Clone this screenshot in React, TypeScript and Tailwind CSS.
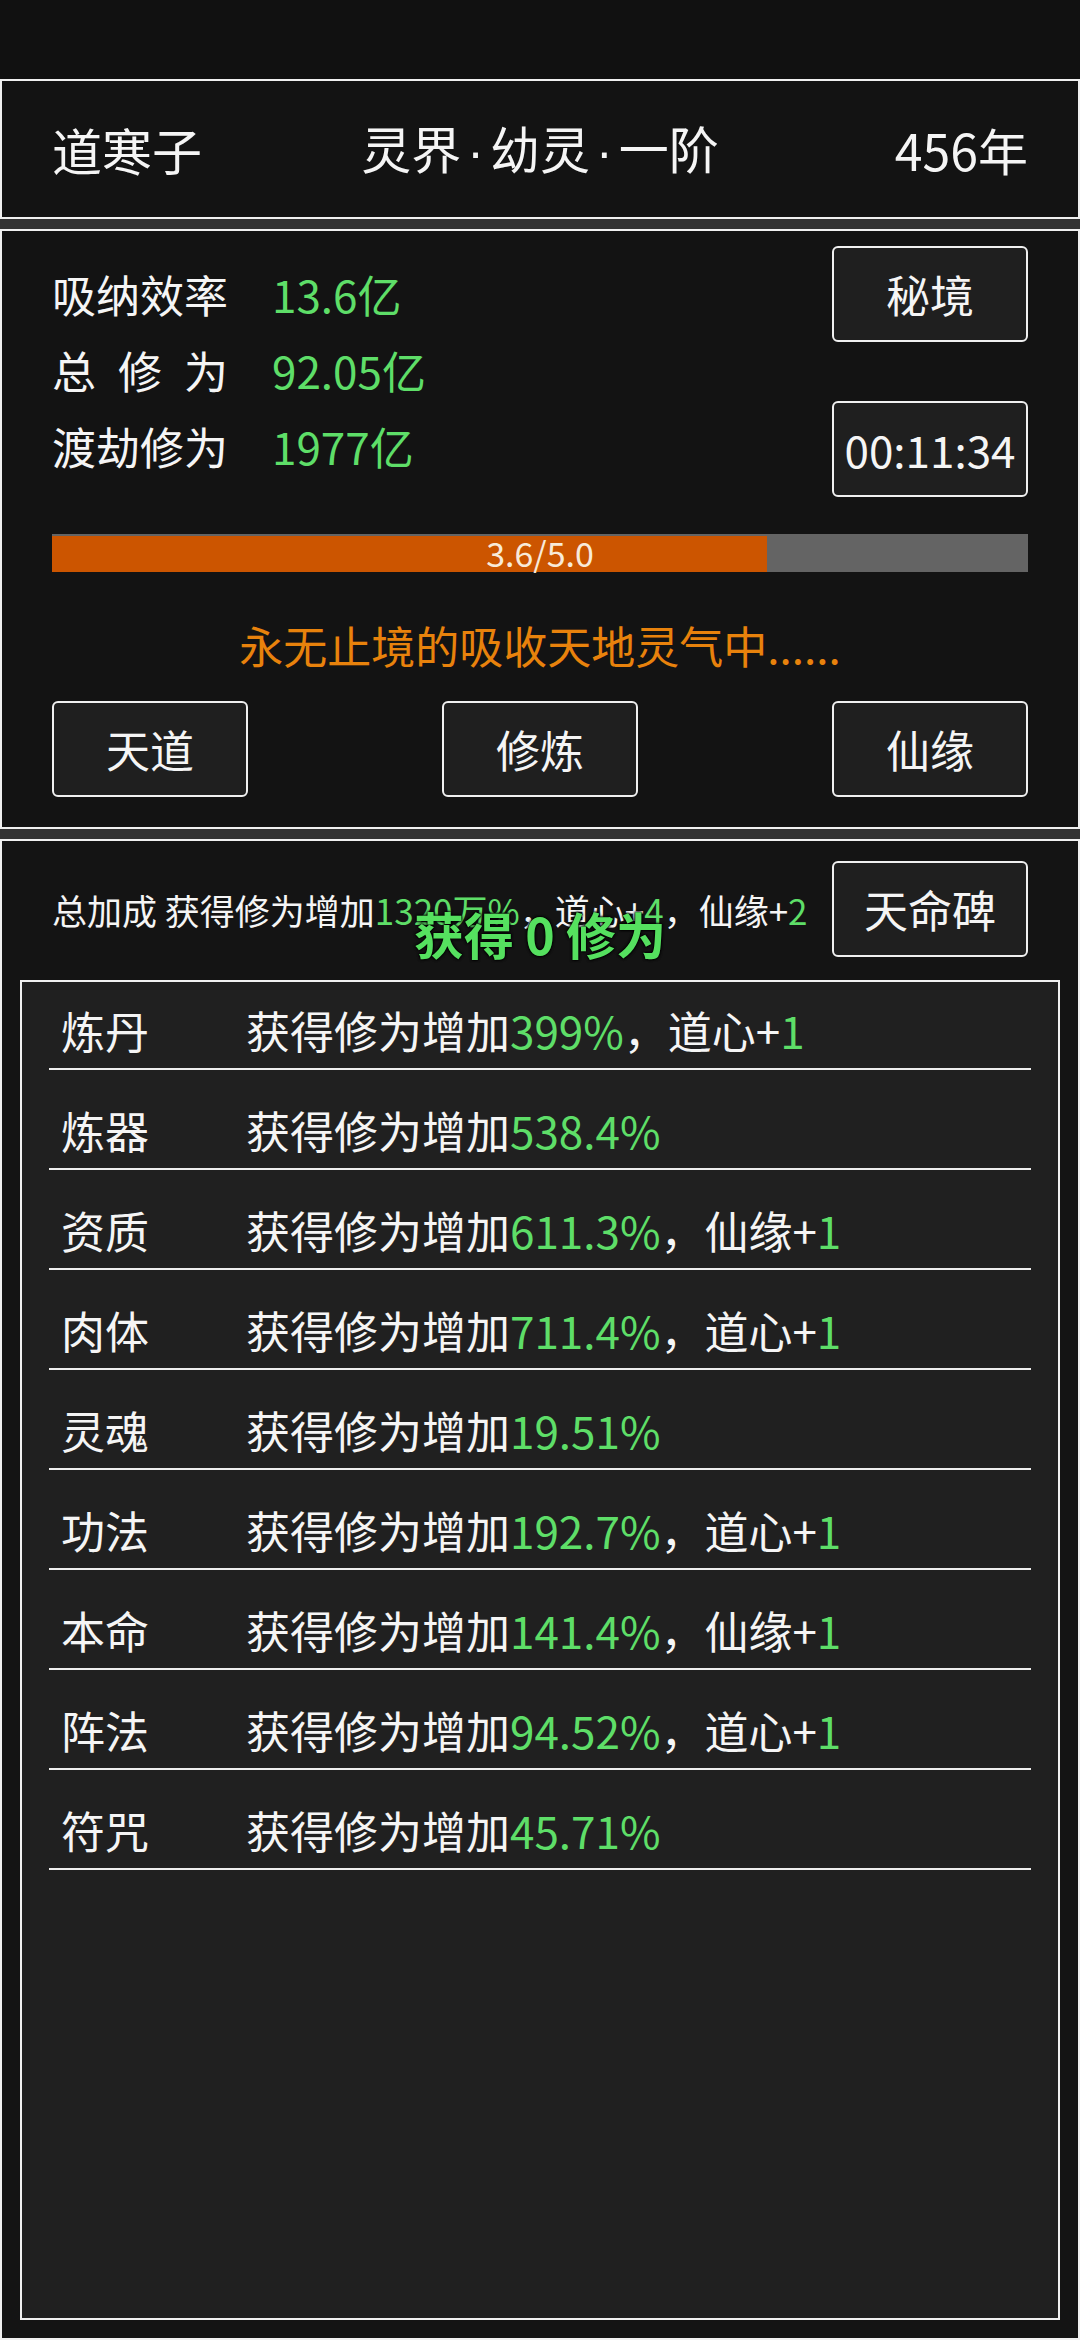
const rows = [
  { name: "炼丹", pct: "399%", extra: "道心" },
  { name: "炼器", pct: "538.4%", extra: "" },
  { name: "资质", pct: "611.3%", extra: "仙缘" },
  { name: "肉体", pct: "711.4%", extra: "道心" },
  { name: "灵魂", pct: "19.51%", extra: "" },
  { name: "功法", pct: "192.7%", extra: "道心" },
  { name: "本命", pct: "141.4%", extra: "仙缘" },
  { name: "阵法", pct: "94.52%", extra: "道心" },
  { name: "符咒", pct: "45.71%", extra: "" },
];

function Btn({ children }: { children: React.ReactNode }) {
  return (
    <div className="w-[196px] h-[96px] flex items-center justify-center border-2 border-[#f0f0f0] rounded-[6px] bg-[#1f1f1f] text-[44px] leading-none text-[#f5f5f5]">
      {children}
    </div>
  );
}

function Stat({ label, value, spread }: { label: string; value: string; spread?: boolean }) {
  return (
    <div className="h-[76px] flex items-center">
      {spread ? (
        <div className="w-[176px] flex justify-between">
          {label.split("").map((c, i) => (
            <span key={i}>{c}</span>
          ))}
        </div>
      ) : (
        <div className="w-[176px]">{label}</div>
      )}
      <div className="ml-[44px] text-[#5ede68]">{value}</div>
    </div>
  );
}

function Dot() {
  return <span className="font-['Liberation_Sans',sans-serif] px-[6px]">·</span>;
}

export default function App() {
  return (
    <div className="w-[1080px] h-[2340px] bg-[#333333] flex flex-col overflow-hidden font-['Noto_Sans_CJK_SC',sans-serif] text-[#f5f5f5]">
      <div className="h-[79px] bg-[#111111]" />

      {/* header */}
      <div className="h-[140px] border-2 border-[#f0f0f0] bg-[#131313] grid grid-cols-[1fr_auto_1fr] items-center px-[50px] text-[50px] leading-none">
        <div>道寒子</div>
        <div className="text-center whitespace-nowrap">
          灵界<Dot />幼灵<Dot />一阶
        </div>
        <div className="text-right">456年</div>
      </div>

      {/* cultivation panel */}
      <div className="mt-[10px] h-[600px] border-2 border-[#f0f0f0] bg-[#131313] flex flex-col px-[50px]">
        <div className="flex justify-between">
          <div className="pt-[25px] flex flex-col text-[44px] leading-none">
            <Stat label="吸纳效率" value="13.6亿" />
            <Stat label="总修为" value="92.05亿" spread />
            <Stat label="渡劫修为" value="1977亿" />
          </div>
          <div className="pt-[15px] flex flex-col gap-[59px]">
            <Btn>秘境</Btn>
            <Btn>00:11:34</Btn>
          </div>
        </div>

        <div className="mt-[37px] h-[38px] relative bg-[#646464]">
          <div className="absolute left-0 top-[2px] bottom-0 w-[73.3%] bg-[#cc5500]" />
          <div className="absolute inset-0 flex items-center justify-center text-[34px] leading-none text-[#f8ead9]">
            3.6/5.0
          </div>
        </div>

        <div className="mt-[43px] h-[60px] flex items-center justify-center text-[44px] leading-none text-[#e8820c]">
          永无止境的吸收天地灵气中......
        </div>

        <div className="mt-[26px] flex justify-between">
          <Btn>天道</Btn>
          <Btn>修炼</Btn>
          <Btn>仙缘</Btn>
        </div>
      </div>

      {/* bonus panel */}
      <div className="mt-[10px] flex-1 relative border-2 border-[#f0f0f0] bg-[#141414] flex flex-col">
        <div className="pt-[20px] px-[50px] flex items-center justify-between">
          <div className="text-[35px] leading-none whitespace-nowrap">
            总加成 获得修为增加<span className="text-[#5ede68]">1320万%</span>，道心+
            <span className="text-[#5ede68]">4</span>，仙缘+<span className="text-[#5ede68]">2</span>
          </div>
          <Btn>天命碑</Btn>
        </div>

        <div className="absolute left-0 right-0 top-[62px] h-[60px] flex items-center justify-center text-[50px] font-bold leading-none text-[#55e05f] [text-shadow:0_0_3px_#000,0_0_3px_#000,0_0_2px_#000]">
          获得 0 修为
        </div>

        <div className="mt-[23px] mx-[18px] h-[1340px] border-2 border-[#f0f0f0] bg-[#202020] overflow-hidden">
          <div className="-mt-[12px] flex flex-col">
            {rows.map((r) => (
              <div
                key={r.name}
                className="mx-[27px] h-[100px] border-b-2 border-[#eeeeee] flex items-center pt-[22px] text-[44px] leading-none"
              >
                <div className="w-[197px] pl-[12px]">{r.name}</div>
                <div className="whitespace-nowrap">
                  获得修为增加<span className="text-[#5ede68]">{r.pct}</span>
                  {r.extra && (
                    <>
                      ，{r.extra}+<span className="text-[#5ede68]">1</span>
                    </>
                  )}
                </div>
              </div>
            ))}
          </div>
        </div>
      </div>
    </div>
  );
}
